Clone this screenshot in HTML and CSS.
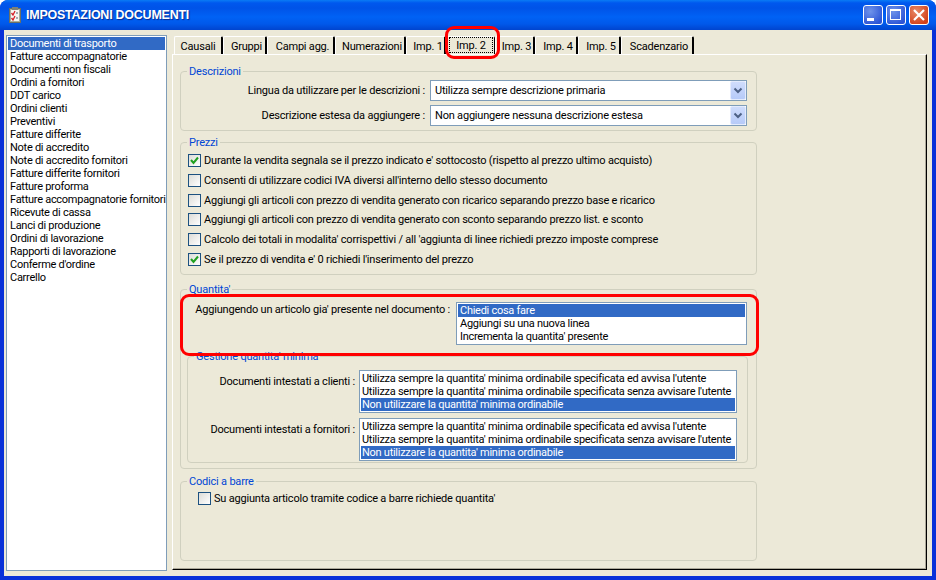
FILE: index.html
```html
<!DOCTYPE html>
<html lang="it">
<head>
<meta charset="utf-8">
<title>Impostazioni documenti</title>
<link rel="stylesheet" href="styles.css">
</head>
<body>
<div class="window">
  <header class="titlebar">
    <svg class="app-icon" width="14" height="16" viewBox="0 0 14 16">
      <rect x="0.500" y="1.500" width="11" height="14" fill="#a9ad9c" stroke="#6a6f66"/>
      <rect x="2" y="3" width="8" height="11" fill="#f7f7f2"/>
      <rect x="3" y="0" width="6" height="3" fill="#7d8078"/>
      <path d="M2.500 6l1.500 2 2-4M2.500 11l1.500 2 2-4" fill="none" stroke="#d4202a" stroke-width="1.300"/>
      <path d="M7 6h2M7 11h2" stroke="#55607a"/>
    </svg>
    <h1 class="title">IMPOSTAZIONI DOCUMENTI</h1>
    <div class="win-buttons">
      <div class="win-btn"><svg width="20" height="20" viewBox="0 0 20 20"><rect x="4" y="13" width="7" height="3" fill="#fff"/></svg></div>
      <div class="win-btn"><svg width="20" height="20" viewBox="0 0 20 20"><rect x="4.500" y="4.500" width="10" height="10" fill="none" stroke="#fff"/><rect x="4" y="4" width="11" height="2" fill="#fff"/></svg></div>
      <div class="win-btn win-close"><svg width="20" height="20" viewBox="0 0 20 20"><path d="M5 5l10 10M15 5L5 15" stroke="#fff" stroke-width="2.200"/></svg></div>
    </div>
  </header>

  <div class="client">
    <ul class="listbox doc-list">
      <li class="sel">Documenti di trasporto</li>
      <li>Fatture accompagnatorie</li>
      <li>Documenti non fiscali</li>
      <li>Ordini a fornitori</li>
      <li>DDT carico</li>
      <li>Ordini clienti</li>
      <li>Preventivi</li>
      <li>Fatture differite</li>
      <li>Note di accredito</li>
      <li>Note di accredito fornitori</li>
      <li>Fatture differite fornitori</li>
      <li>Fatture proforma</li>
      <li>Fatture accompagnatorie fornitori</li>
      <li>Ricevute di cassa</li>
      <li>Lanci di produzione</li>
      <li>Ordini di lavorazione</li>
      <li>Rapporti di lavorazione</li>
      <li>Conferme d'ordine</li>
      <li>Carrello</li>
    </ul>

    <div class="tabs-area">
      <nav class="tabs">
        <div class="tab tab-first">Causali</div>
        <div class="tab">Gruppi</div>
        <div class="tab">Campi agg.</div>
        <div class="tab">Numerazioni</div>
        <div class="tab tab-before-active">Imp. 1</div>
        <div class="tab tab-active"><span class="focus">Imp. 2</span></div>
        <div class="tab">Imp. 3</div>
        <div class="tab">Imp. 4</div>
        <div class="tab">Imp. 5</div>
        <div class="tab">Scadenzario</div>
      </nav>

      <main class="panel">
        <fieldset class="group g-descr">
          <legend>Descrizioni</legend>
          <div class="field">
            <label class="lbl lbl-descr">Lingua da utilizzare per le descrizioni :</label>
            <div class="combo"><span class="combo-text">Utilizza sempre descrizione primaria</span>
              <span class="combo-btn"><svg width="14" height="17" viewBox="0 0 14 17"><path d="M3.500 6.500l3.500 3.500 3.500-3.500" fill="none" stroke="#4d6185" stroke-width="2"/></svg></span>
            </div>
          </div>
          <div class="field">
            <label class="lbl lbl-descr">Descrizione estesa da aggiungere :</label>
            <div class="combo"><span class="combo-text">Non aggiungere nessuna descrizione estesa</span>
              <span class="combo-btn"><svg width="14" height="17" viewBox="0 0 14 17"><path d="M3.500 6.500l3.500 3.500 3.500-3.500" fill="none" stroke="#4d6185" stroke-width="2"/></svg></span>
            </div>
          </div>
        </fieldset>

        <fieldset class="group g-prezzi">
          <legend>Prezzi</legend>
          <div class="checks">
            <div class="check"><span class="box"><svg width="11" height="11" viewBox="0 0 11 11"><path d="M2 5l2.500 3L9 2.500" fill="none" stroke="#21a121" stroke-width="2"/></svg></span>Durante la vendita segnala se il prezzo indicato e' sottocosto (rispetto al prezzo ultimo acquisto)</div>
            <div class="check"><span class="box"></span>Consenti di utilizzare codici IVA diversi all'interno dello stesso documento</div>
            <div class="check"><span class="box"></span>Aggiungi gli articoli con prezzo di vendita generato con ricarico separando prezzo base e ricarico</div>
            <div class="check"><span class="box"></span>Aggiungi gli articoli con prezzo di vendita generato con sconto separando prezzo list. e sconto</div>
            <div class="check"><span class="box"></span>Calcolo dei totali in modalita' corrispettivi / all 'aggiunta di linee richiedi prezzo imposte comprese</div>
            <div class="check"><span class="box"><svg width="11" height="11" viewBox="0 0 11 11"><path d="M2 5l2.500 3L9 2.500" fill="none" stroke="#21a121" stroke-width="2"/></svg></span>Se il prezzo di vendita e' 0 richiedi l'inserimento del prezzo</div>
          </div>
        </fieldset>

        <fieldset class="group g-quant">
          <legend>Quantita'</legend>
          <div class="field field-q">
            <label class="lbl lbl-q">Aggiungendo un articolo gia' presente nel documento :</label>
            <ul class="listbox list-q">
              <li class="sel">Chiedi cosa fare</li>
              <li>Aggiungi su una nuova linea</li>
              <li>Incrementa la quantita' presente</li>
            </ul>
          </div>
          <fieldset class="group g-min">
            <legend>Gestione quantita' minima</legend>
            <div class="field field-m">
              <label class="lbl lbl-m">Documenti intestati a clienti :</label>
              <ul class="listbox list-m">
                <li>Utilizza sempre la quantita' minima ordinabile specificata ed avvisa l'utente</li>
                <li>Utilizza sempre la quantita' minima ordinabile specificata senza avvisare l'utente</li>
                <li class="sel">Non utilizzare la quantita' minima ordinabile</li>
              </ul>
            </div>
            <div class="field field-m">
              <label class="lbl lbl-m">Documenti intestati a fornitori :</label>
              <ul class="listbox list-m">
                <li>Utilizza sempre la quantita' minima ordinabile specificata ed avvisa l'utente</li>
                <li>Utilizza sempre la quantita' minima ordinabile specificata senza avvisare l'utente</li>
                <li class="sel">Non utilizzare la quantita' minima ordinabile</li>
              </ul>
            </div>
          </fieldset>
        </fieldset>

        <fieldset class="group g-codici">
          <legend>Codici a barre</legend>
          <div class="check check-bar"><span class="box"></span>Su aggiunta articolo tramite codice a barre richiede quantita'</div>
        </fieldset>
      </main>
    </div>
  </div>

  <div class="mark mark-tab"></div>
  <div class="mark mark-quant"></div>
</div>
</body>
</html>
```

FILE: styles.css
```css
* { box-sizing: border-box; }
html, body { margin: 0; padding: 0; background: #fff; }
body {
  font-family: Roboto, "Liberation Sans", Arial, sans-serif;
  font-size: 11px;
  letter-spacing: -0.2px;
  color: #000;
}
.window {
  position: relative;
  width: 936px;
  height: 580px;
  display: flex;
  flex-direction: column;
  background: #0831d9;
  border-radius: 8px 8px 0 0;
  overflow: hidden;
}
.titlebar {
  height: 30px;
  flex: none;
  display: flex;
  align-items: center;
  padding: 0 7px 0 9px;
  background: linear-gradient(#0a7bf5 0, #0058ee 3px, #0053e8 8px, #0062f5 17px, #0058ea 24px, #0044cf 30px);
}
.app-icon { flex: none; margin-right: 3px; }
.title {
  margin: 0;
  font-family: "Liberation Sans", Arial, sans-serif;
  font-size: 12.5px;
  font-weight: bold;
  color: #fff;
  text-shadow: 1px 1px 1px #0a2a90;
  letter-spacing: -0.25px;
}
.win-buttons { margin-left: auto; display: flex; gap: 3px; }
.win-btn {
  width: 20px;
  height: 20px;
  border: 1px solid #fff;
  border-radius: 3px;
  background: radial-gradient(circle at 35% 30%, #6f93ea, #2c55d6 80%);
  display: flex;
  align-items: center;
  justify-content: center;
  overflow: hidden;
}
.win-btn svg { flex: none; }
.win-close { background: radial-gradient(circle at 35% 30%, #e88a68, #d2401a 80%); }

.client {
  flex: 1;
  min-height: 0;
  margin: 0 4px 4px;
  padding: 5px 5px 5px 2px;
  display: flex;
  gap: 5px;
  background: #ece9d8;
}
.listbox {
  list-style: none;
  margin: 0;
  padding: 1px;
  background: #fff;
  border: 1px solid #7f9db9;
  letter-spacing: -0.27px;
}
.listbox li {
  height: 13px;
  line-height: 13px;
  padding-left: 2px;
  white-space: nowrap;
}
.listbox li.sel { background: #316ac5; color: #fff; }
.doc-list { width: 161px; flex: none; }

.tabs-area {
  flex: 1;
  min-width: 0;
  display: flex;
  flex-direction: column;
  padding: 1px 0 1px;
}
.tabs {
  flex: none;
  height: 18px;
  margin-left: 2px;
  display: grid;
  grid-template-columns: 49px 44px 68px 71px 40px 49px 40px 43px 43px 73px;
  justify-content: start;
}
.tab {
  height: 18px;
  line-height: 20px;
  padding-left: 4px;
  text-align: center;
  border-top: 1px solid #fff;
  border-left: 1px solid #fff;
  border-right: 2px solid #000;
  border-radius: 2px 2px 0 0;
  white-space: nowrap;
}
.tab-first { padding-left: 0; }
.tab-before-active { padding-left: 5px; }
.tab-active { padding: 0 1px 1px 2px; border-right-width: 1px; }
.focus {
  display: block;
  height: 16px;
  line-height: 18px;
  outline: 1px dotted #000;
  outline-offset: -1px;
}
.panel {
  flex: 1;
  min-height: 0;
  display: flex;
  flex-direction: column;
  align-items: flex-start;
  padding: 10px 0 0 7px;
  border-top: 1px solid #fff;
  border-left: 1px solid #fff;
  border-right: 1px solid #000;
  border-bottom: 1px solid #000;
  box-shadow: inset -1px -1px 0 #aca899;
}

.group {
  margin: 0;
  padding: 0;
  min-width: 0;
  width: 577px;
  flex: none;
  border: 1px solid #d0d0bf;
  border-radius: 4px;
}
.group legend {
  margin-left: 6px;
  padding: 0 2px;
  height: 13px;
  line-height: 13px;
  color: #0046d5;
  white-space: nowrap;
}
.g-descr { height: 66px; }
.g-prezzi { height: 139px; margin-top: 5px; }
.g-quant { height: 186px; margin-top: 8px; }
.g-codici { height: 86px; margin-top: 6px; }

.field { display: flex; align-items: flex-start; }
.lbl { flex: none; text-align: right; white-space: nowrap; }
.g-descr .field { height: 21px; margin: 0 0 4px; }
.g-descr .field:first-of-type { margin-top: 2px; }
.lbl-descr { width: 244px; line-height: 21px; margin-right: 5px; }
.combo {
  width: 317px;
  height: 21px;
  border: 1px solid #7f9db9;
  background: #fff;
  display: flex;
  align-items: center;
  justify-content: space-between;
  padding: 0 0 0 4px;
}
.combo-btn {
  width: 16px;
  height: 19px;
  display: flex;
  align-items: center;
  justify-content: center;
  background: linear-gradient(#cfdcfc, #b6caf8);
  border: 1px solid #e4ebfd;
  border-radius: 2px;
}
.combo-btn svg { flex: none; }

.checks { display: flex; flex-direction: column; gap: 6.8px; padding: 5px 0 0 7px; }
.check { display: flex; align-items: center; height: 13px; white-space: nowrap; }
.box {
  flex: none;
  width: 13px;
  height: 13px;
  margin-right: 3px;
  border: 1px solid #1c5180;
  background: linear-gradient(135deg, #dcdcd7, #fff);
  display: flex;
  align-items: center;
  justify-content: center;
}
.box svg { flex: none; }
.check-bar { padding-left: 17px; margin-top: 4px; }

.field-q { margin-top: 6px; }
.lbl-q { width: 269px; margin: 1px 6px 0 0; line-height: 13px; }
.list-q { width: 291px; height: 43px; }
.g-min { width: 561px; height: 113px; margin: 5px 0 0 6px; }
.field-m { margin-bottom: 5px; }
.field-m:first-of-type { margin-top: 7px; }
.lbl-m { width: 167px; margin: 5px 4px 0 0; line-height: 13px; }
.list-m { width: 378px; height: 43px; }
.list-m li { padding-left: 1px; }

.mark {
  position: absolute;
  border: 3px solid #f00;
  pointer-events: none;
}
.mark-tab { left: 445px; top: 26px; width: 55px; height: 33px; border-radius: 9px; }
.mark-quant { left: 180px; top: 294px; width: 579px; height: 62px; border-radius: 9px; }
```
